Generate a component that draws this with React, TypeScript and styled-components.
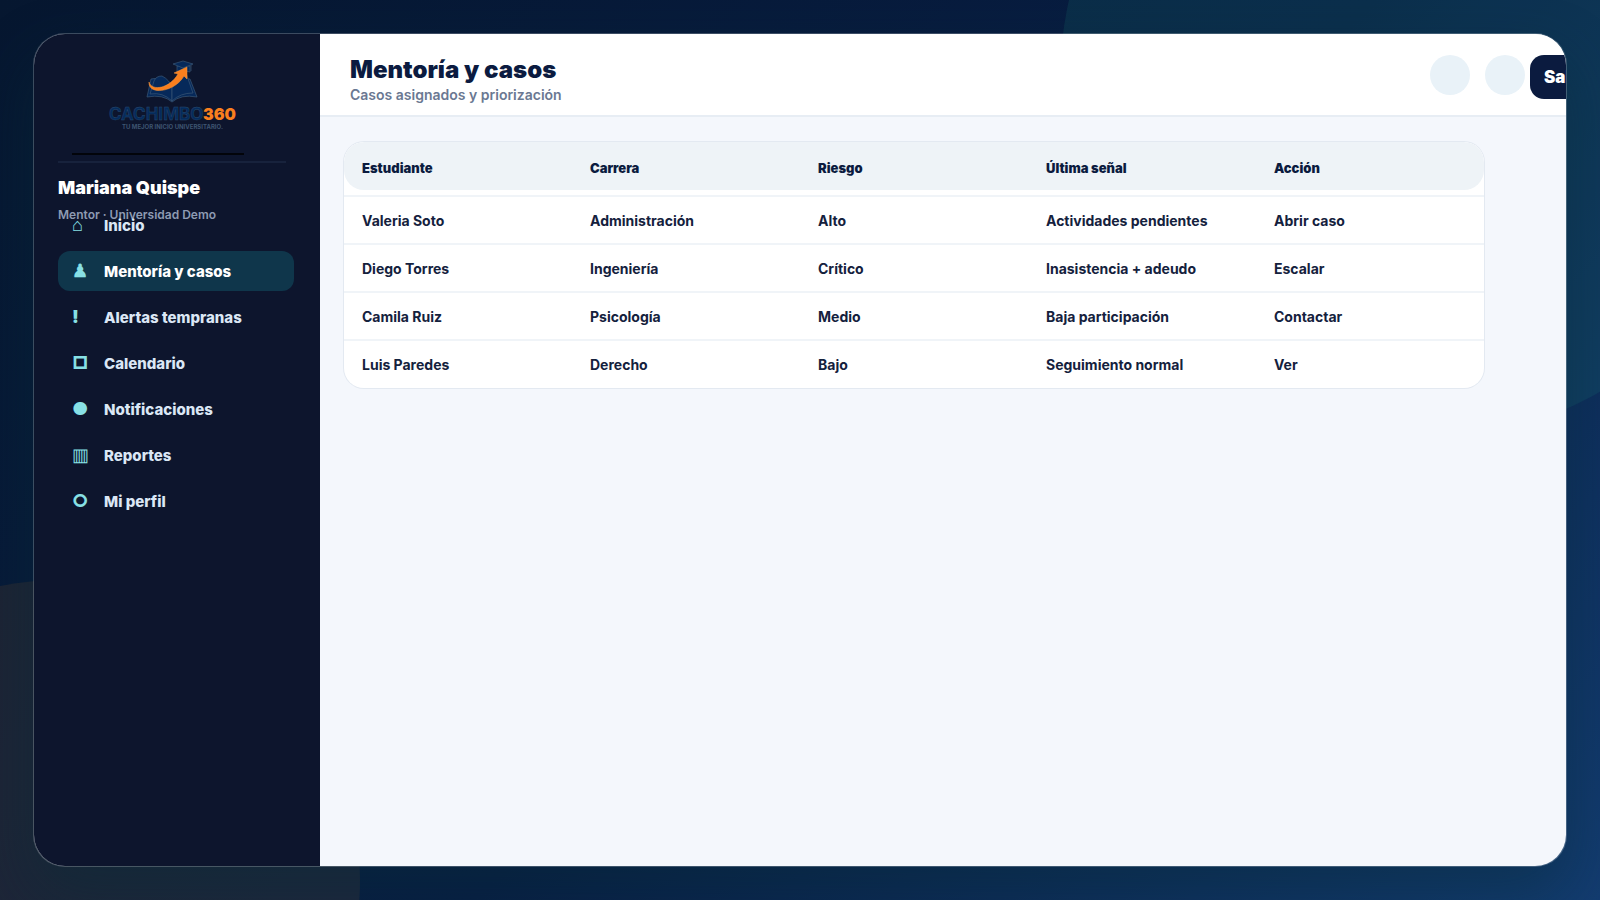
import React from 'react';
import styled, { createGlobalStyle } from 'styled-components';

const GlobalStyle = createGlobalStyle`
  * { box-sizing: border-box; }
  html, body, #root { height: 100%; }
  body {
    margin: 0;
    font-family: Inter, "Liberation Sans", sans-serif;
    color: #0d1b3d;
  }
`;

const Page = styled.div`
  position: relative;
  display: flex;
  min-height: 100%;
  padding: 33px;
  overflow: hidden;
  background: linear-gradient(135deg, #061730 0%, #081e44 55%, #133c70 100%);
`;

const Glow = styled.div<{ $tone: 'teal' | 'amber' }>`
  position: absolute;
  border-radius: 50%;
  ${({ $tone }) =>
    $tone === 'teal'
      ? 'width: 720px; height: 720px; top: -280px; right: -180px; background: rgba(32, 150, 130, 0.15);'
      : 'width: 600px; height: 600px; bottom: -280px; left: -240px; background: rgba(230, 130, 22, 0.1);'}
`;

const Shell = styled.div`
  position: relative;
  display: flex;
  flex: 1;
  min-width: 0;
  overflow: hidden;
  border: 1px solid rgba(255, 255, 255, 0.22);
  border-radius: 32px;
  background: #f4f7fc;
  background-clip: padding-box;
  box-shadow: 0 26px 60px rgba(6, 44, 56, 0.45);
`;

const Sidebar = styled.aside`
  flex: 0 0 286px;
  padding: 16px 26px 24px 24px;
  background: #0d152d;
`;

const Brand = styled.div`
  display: flex;
  flex-direction: column;
  margin: 0 50px 0 14px;
  border-bottom: 2px solid #02040a;

  svg { display: block; width: 172px; height: 103px; overflow: visible; }
`;

const Profile = styled.section`
  height: 44px;
  margin: 6px 8px 0 0;
  border-top: 2px solid #17223c;
`;

const ProfileName = styled.h2`
  margin: 14px 0 0;
  font-size: 18px;
  line-height: 22px;
  font-weight: 900;
  color: #fff;
`;

const ProfileRole = styled.p`
  margin: 8px 0 0;
  font-size: 12px;
  line-height: 16px;
  font-weight: 600;
  color: #8d9bb3;
`;

const Nav = styled.nav`
  position: relative;
  display: grid;
  gap: 6px;
`;

const NavLink = styled.a<{ $active?: boolean }>`
  display: flex;
  align-items: center;
  height: 40px;
  padding: 0 14px;
  border-radius: 12px;
  font-size: 15px;
  font-weight: 800;
  text-decoration: none;
  color: ${({ $active }) => ($active ? '#fff' : '#dbe7f5')};
  background: ${({ $active }) => ($active ? '#0f364b' : 'transparent')};
`;

const NavIcon = styled.span<{ $light?: boolean }>`
  flex: 0 0 32px;
  font-size: 18px;
  line-height: 20px;
  font-weight: ${({ $light }) => ($light ? 400 : 900)};
  color: #87e0e5;
`;

const Main = styled.main`
  flex: 1;
  min-width: 0;
`;

const TopBar = styled.header`
  display: flex;
  align-items: flex-start;
  justify-content: space-between;
  height: 83px;
  padding: 21px 30px 0;
  border-bottom: 2px solid #e7edf4;
  background: #fff;
`;

const Title = styled.h1`
  margin: 0;
  font-size: 24px;
  line-height: 30px;
  font-weight: 900;
  color: #0b1b40;
`;

const Subtitle = styled.p`
  margin: 0;
  font-size: 14px;
  line-height: 20px;
  font-weight: 600;
  color: #6a7892;
`;

const Actions = styled.div`
  display: flex;
  align-items: flex-start;
  flex: 0 0 106px;
  min-width: 0;
`;

const RoundButton = styled.button`
  flex: 0 0 40px;
  height: 40px;
  margin-right: 15px;
  padding: 0;
  border: 0;
  border-radius: 50%;
  background: #e9f2f8;

  & + & { margin-right: 5px; }
`;

const LogoutButton = styled.button`
  flex: none;
  height: 44px;
  padding: 0 14px;
  border: 0;
  border-radius: 14px;
  font: 900 17px Inter, "Liberation Sans", sans-serif;
  color: #fff;
  background: #0b1b3f;
`;

const Content = styled.div`
  padding: 25px 24px;
`;

const CaseTable = styled.table`
  display: block;
  max-width: 1140px;
  padding-bottom: 1px;
  overflow: hidden;
  border-radius: 20px;
  background: #fff;
  box-shadow: 0 0 0 1px #e3e9f1;
  font-size: 14px;
  line-height: 18px;
`;

const TableHead = styled.thead`
  display: block;
  margin-bottom: 5px;
  border-radius: 20px;
  background: #eef3f7;
`;

const TableBody = styled.tbody`
  display: block;
`;

const Row = styled.tr`
  display: grid;
  grid-template-columns: repeat(5, 1fr);

  ${TableBody} & { border-top: 2px solid #f0f4f8; }
`;

const HeadCell = styled.th`
  padding: 17px 18px 13px;
  font-size: 13px;
  font-weight: 900;
  text-align: left;
  color: #0b1b3f;
`;

const Cell = styled.td`
  padding: 15px 18px 13px;
  font-weight: 700;
  color: #14213d;
`;

const Logo = () => (
  <svg viewBox="0 0 172 103" role="img" aria-label="Cachimbo360">
    <g stroke="#3b5875" strokeWidth="0.7" strokeLinejoin="round" fill="#06295a">
      <path d="M79 29 L75 47 Q91 44 100 52 Q109 44 125 47 L118 29 Q107 28 100 36 Q91 26 79 29Z" />
      <path d="M82 31 Q84 26 90 26 Q98 30 100 38 L100 51 Q91 42 78 44Z" />
      <path d="M100 38 Q104 30 114 23 L121 43 Q108 43 100 51Z" />
      <path d="M105 16 V22 Q111 19 118 22 V16Z" />
      <path d="M101 14 L111 11 L121 14 L111 18Z" />
      <path d="M119 15 V21" fill="none" />
    </g>
    <path
      d="M77 32 C76 46 103 42 112 26 L115 29 L115 17 L102 23 L106 24 C98 38 80 42 77 32Z"
      fill="#f97f1e"
      stroke="#f9983f"
      strokeWidth="0.5"
    />
    <text x="37" y="70" fontFamily="Inter, sans-serif" fontSize="17" fontWeight="700" fill="#052b5c" stroke="#2b4c6e" strokeWidth="0.4">
      CACHIMBO
    </text>
    <text x="131" y="70" fontFamily="Inter, sans-serif" fontSize="16" fontWeight="900" fill="#f97f1e">
      360
    </text>
    <text x="50" y="79" fontFamily="Inter, sans-serif" fontSize="6" fontWeight="700" fill="#3d5470">
      TU MEJOR INICIO UNIVERSITARIO.
    </text>
  </svg>
);

const navItems = [
  { icon: '⌂', label: 'Inicio', light: true },
  { icon: '♟', label: 'Mentoría y casos', active: true },
  { icon: '!', label: 'Alertas tempranas' },
  { icon: '□', label: 'Calendario' },
  { icon: '●', label: 'Notificaciones' },
  { icon: '▥', label: 'Reportes', light: true },
  { icon: '○', label: 'Mi perfil' },
];

const columns = ['Estudiante', 'Carrera', 'Riesgo', 'Última señal', 'Acción'];

const cases = [
  ['Valeria Soto', 'Administración', 'Alto', 'Actividades pendientes', 'Abrir caso'],
  ['Diego Torres', 'Ingeniería', 'Crítico', 'Inasistencia + adeudo', 'Escalar'],
  ['Camila Ruiz', 'Psicología', 'Medio', 'Baja participación', 'Contactar'],
  ['Luis Paredes', 'Derecho', 'Bajo', 'Seguimiento normal', 'Ver'],
];

export default function App() {
  return (
    <>
      <GlobalStyle />
      <Page>
        <Glow $tone="teal" />
        <Glow $tone="amber" />
        <Shell>
          <Sidebar>
            <Brand>
              <Logo />
            </Brand>
            <Profile>
              <ProfileName>Mariana Quispe</ProfileName>
              <ProfileRole>Mentor · Universidad Demo</ProfileRole>
            </Profile>
            <Nav>
              {navItems.map(({ icon, label, active, light }) => (
                <NavLink key={label} href="#" $active={active} aria-current={active ? 'page' : undefined}>
                  <NavIcon aria-hidden="true" $light={light}>{icon}</NavIcon>
                  {label}
                </NavLink>
              ))}
            </Nav>
          </Sidebar>
          <Main>
            <TopBar>
              <div>
                <Title>Mentoría y casos</Title>
                <Subtitle>Casos asignados y priorización</Subtitle>
              </div>
              <Actions>
                <RoundButton type="button" aria-label="Notificaciones" />
                <RoundButton type="button" aria-label="Perfil" />
                <LogoutButton type="button">Salir</LogoutButton>
              </Actions>
            </TopBar>
            <Content>
              <CaseTable>
                <TableHead>
                  <Row>
                    {columns.map((column) => (
                      <HeadCell key={column} scope="col">{column}</HeadCell>
                    ))}
                  </Row>
                </TableHead>
                <TableBody>
                  {cases.map((row) => (
                    <Row key={row[0]}>
                      {row.map((value) => (
                        <Cell key={value}>{value}</Cell>
                      ))}
                    </Row>
                  ))}
                </TableBody>
              </CaseTable>
            </Content>
          </Main>
        </Shell>
      </Page>
    </>
  );
}
